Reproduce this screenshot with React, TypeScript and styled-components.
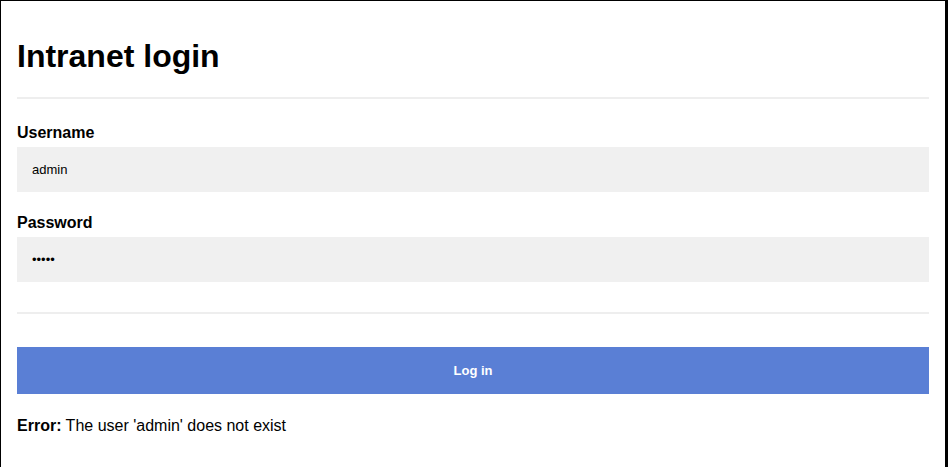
import React from "react";
import styled, { createGlobalStyle } from "styled-components";

const Global = createGlobalStyle`
  html, body { margin: 0; padding: 0; background: #fff; }
  body { font-family: "Liberation Sans", Arial, sans-serif; color: #000; }
  * { box-sizing: border-box; }
`;

const Frame = styled.div`
  width: 948px;
  min-height: 467px;
  border-top: 1px solid #000;
  border-left: 1px solid #000;
  border-right: 3px solid #000;
  padding: 0 16px;
  display: flex;
  flex-direction: column;
`;

const Title = styled.h1`
  margin: 37px 0 22px;
  font-size: 32px;
  line-height: 37px;
  font-weight: bold;
`;

const Rule = styled.hr<{ $top?: number }>`
  margin: ${(p) => p.$top ?? 0}px 0 0;
  border: none;
  height: 2px;
  background: #eeeeee;
`;

const Field = styled.div<{ $top: number }>`
  display: flex;
  flex-direction: column;
  margin-top: ${(p) => p.$top}px;
`;

const Label = styled.label`
  font-size: 16px;
  line-height: 18px;
  font-weight: bold;
  margin-bottom: 5px;
`;

const Input = styled.input`
  height: 45px;
  border: none;
  outline: none;
  background: #f0f0f0;
  padding: 0 15px;
  font-family: "Liberation Sans", Arial, sans-serif;
  font-size: 13px;
  color: #000;
`;

const Button = styled.button`
  margin-top: 33px;
  height: 47px;
  border: none;
  background: #5a7fd5;
  color: #fff;
  font-family: "Liberation Sans", Arial, sans-serif;
  font-size: 13px;
  font-weight: bold;
  cursor: pointer;
`;

const ErrorText = styled.p`
  margin: 23px 0 0;
  font-size: 16px;
  line-height: 18px;
`;

export default function App() {
  return (
    <>
      <Global />
      <Frame>
        <Title>Intranet login</Title>
        <Rule />
        <Field $top={25}>
          <Label htmlFor="u">Username</Label>
          <Input id="u" type="text" value="admin" readOnly />
        </Field>
        <Field $top={22}>
          <Label htmlFor="p">Password</Label>
          <Input id="p" type="password" value="admin" readOnly />
        </Field>
        <Rule $top={30} />
        <Button type="button">Log in</Button>
        <ErrorText>
          <b>Error:</b> The user 'admin' does not exist
        </ErrorText>
      </Frame>
    </>
  );
}
